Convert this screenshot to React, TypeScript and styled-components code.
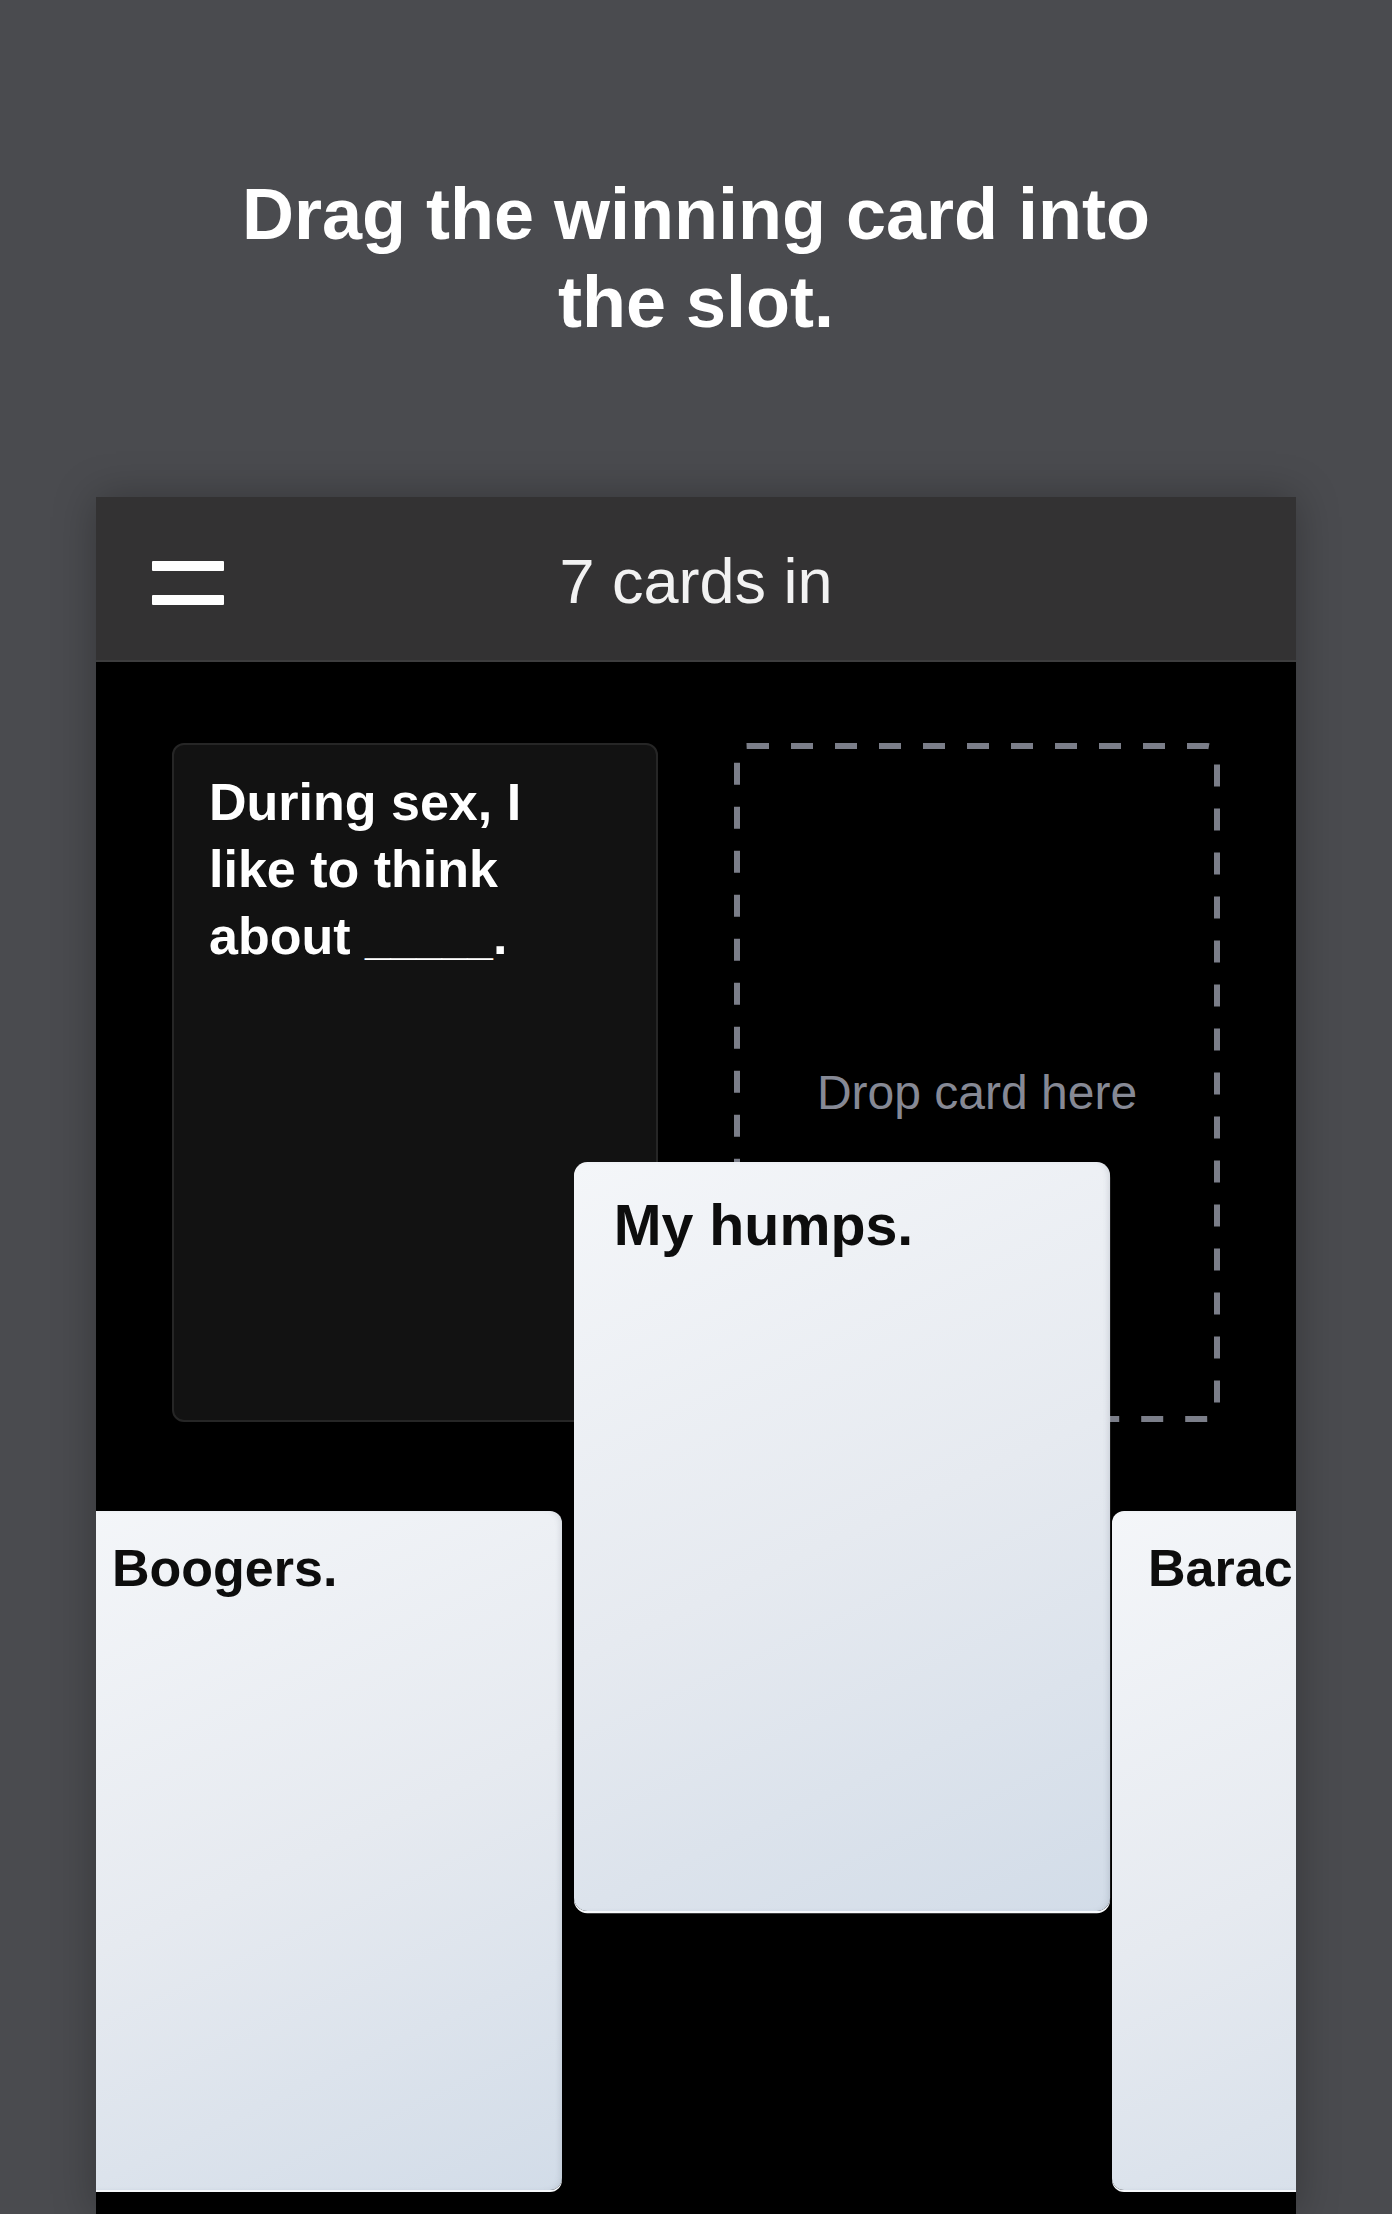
import * as React from 'react'
import styled, { createGlobalStyle } from 'styled-components'

const GlobalStyle = createGlobalStyle`
  html, body {
    margin: 0;
    padding: 0;
    background: #4a4b4f;
    font-family: "Liberation Sans", Arial, Helvetica, sans-serif;
  }
`

const Page = styled.div`
  height: 2214px;
  overflow: hidden;
  display: flex;
  flex-direction: column;
  align-items: center;
`

const Heading = styled.h1`
  margin: 0;
  padding-top: 170px;
  font-size: 72px;
  line-height: 88px;
  font-weight: 700;
  color: #fff;
  text-align: center;
`

const Screen = styled.div`
  position: relative;
  margin-top: 151px;
  width: 1200px;
  flex: 1;
  background: #000;
  box-shadow: 0 0 40px rgba(0, 0, 0, 0.28);
  overflow: hidden;
`

const TopBar = styled.header`
  position: relative;
  height: 163px;
  background: #333233;
  border-bottom: 2px solid #3d3d3e;
  display: flex;
  align-items: center;
  justify-content: center;
`

const MenuButton = styled.div`
  position: absolute;
  left: 56px;
  top: 64px;
  width: 72px;
  display: flex;
  flex-direction: column;
  gap: 24px;
`

const MenuBar = styled.span`
  display: block;
  height: 10px;
  background: #fff;
  border-radius: 1px;
`

const Status = styled.div`
  padding-top: 5px;
  font-size: 63px;
  color: #f2f2f2;
`

const Board = styled.div`
  display: grid;
  grid-template-columns: 486px 486px;
  gap: 76px;
  padding: 81px 76px 0;
`

const PromptCard = styled.div`
  box-sizing: border-box;
  height: 679px;
  padding: 24px 35px;
  background: #121212;
  border: 2px solid #262626;
  border-radius: 12px;
  color: #fff;
  font-size: 52px;
  font-weight: 700;
  line-height: 67px;
`

const Blank = styled.span`
  font-size: 46px;
`

const Slot = styled.div`
  position: relative;
  height: 679px;
  display: flex;
  align-items: center;
  justify-content: center;
  padding-top: 20px;
  box-sizing: border-box;
`

const SlotOutline = styled.svg`
  position: absolute;
  inset: 0;
`

const SlotLabel = styled.span`
  font-size: 48px;
  color: #868995;
`

const Hand = styled.div`
  display: flex;
  gap: 32px;
  margin-top: 89px;
  margin-left: -20px;
`

const AnswerCard = styled.div<{ $lifted?: boolean }>`
  box-sizing: border-box;
  flex: none;
  width: 486px;
  height: 679px;
  padding: 24px 36px;
  border-radius: 12px;
  background: linear-gradient(155deg, #f4f6f9 0%, #e6eaf0 50%, #d2dce8 100%);
  box-shadow: 0 2px 0 #f6f8fb, inset -4px 0 6px -3px rgba(60, 70, 90, 0.18);
  color: #0d0d0d;
  font-size: 52px;
  font-weight: 700;
  line-height: 67px;
  white-space: nowrap;
  overflow: hidden;

  ${(p) =>
    p.$lifted &&
    `
    position: absolute;
    left: 478px;
    top: 665px;
    transform: scale(1.103);
    transform-origin: top left;
    z-index: 2;
  `}
`

const EmptySpot = styled.div`
  flex: none;
  width: 486px;
  height: 679px;
`

export default function App(): JSX.Element {
  return (
    <Page>
      <GlobalStyle />
      <Heading>
        Drag the winning card into
        <br />
        the slot.
      </Heading>
      <Screen>
        <TopBar>
          <MenuButton>
            <MenuBar />
            <MenuBar />
          </MenuButton>
          <Status>7 cards in</Status>
        </TopBar>
        <Board>
          <PromptCard>
            During sex, I like to think about <Blank>_____</Blank>.
          </PromptCard>
          <Slot>
            <SlotOutline width="486" height="679" viewBox="0 0 486 679">
              <rect
                x="3"
                y="3"
                width="480"
                height="673"
                rx="10"
                fill="none"
                stroke="#7b7e89"
                strokeWidth="6"
                strokeDasharray="22 22"
              />
            </SlotOutline>
            <SlotLabel>Drop card here</SlotLabel>
          </Slot>
        </Board>
        <Hand>
          <AnswerCard>Boogers.</AnswerCard>
          <EmptySpot />
          <AnswerCard>Barack Obama.</AnswerCard>
        </Hand>
        <AnswerCard $lifted>My humps.</AnswerCard>
      </Screen>
    </Page>
  )
}
